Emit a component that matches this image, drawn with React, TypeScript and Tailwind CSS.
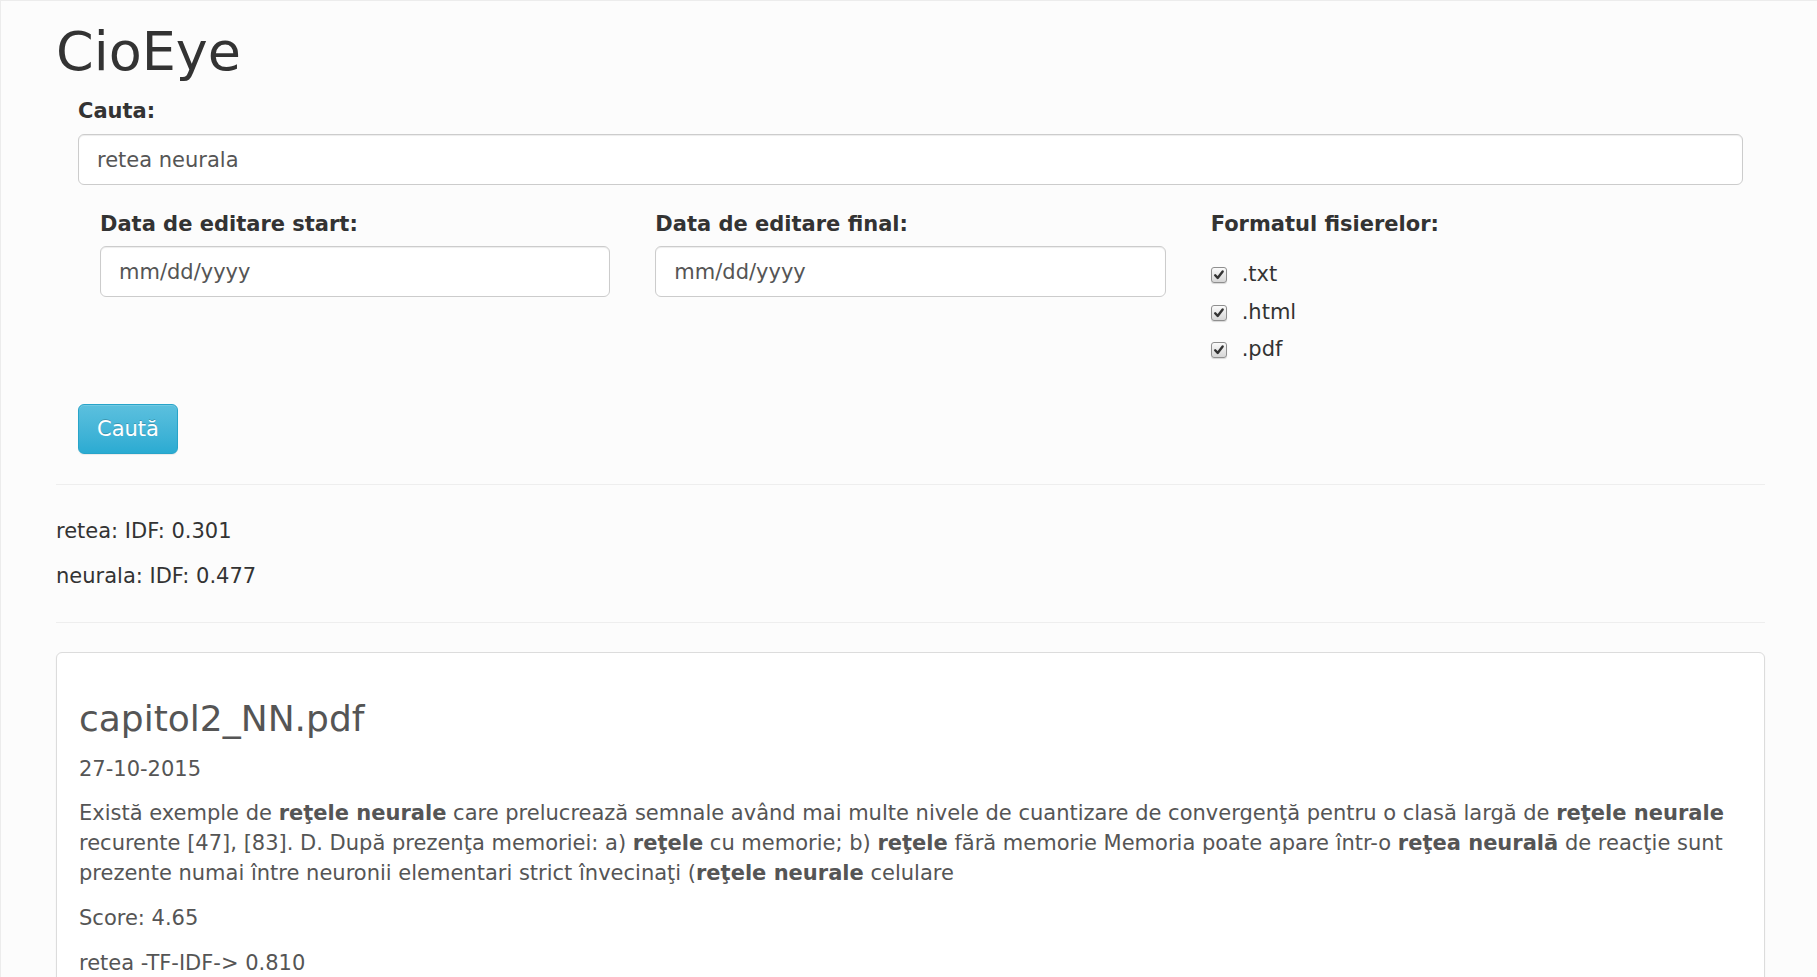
import React from "react";

const CheckMark = () => (
  <span className="inline-flex h-[16px] w-[16px] shrink-0 items-center justify-center rounded-[3px] border border-[#8f8f8f] bg-linear-to-b from-[#fbfbfb] to-[#d6d6d6] shadow-[0_1px_1px_rgba(0,0,0,0.15)]">
    <svg viewBox="0 0 15 15" className="h-[14px] w-[14px]">
      <path d="M3.4 7.8 L6.1 10.6 L11.4 3.8" fill="none" stroke="#333" strokeWidth="2.6" strokeLinecap="round" strokeLinejoin="round" />
    </svg>
  </span>
);

const formats = [".txt", ".html", ".pdf"];

export default function App() {
  return (
    <div
      className="min-h-screen border-t border-l border-[#ececec] bg-[#fcfcfc] pl-[55px] pr-[52px] text-[21px] leading-[30px] text-[#333]"
      style={{ fontFamily: '"DejaVu Sans", Verdana, sans-serif' }}
    >
      <h1 className="mt-[21px] mb-[15px] text-[54px] leading-[59px] font-normal">CioEye</h1>

      <form className="flex flex-col" onSubmit={(e) => e.preventDefault()}>
        <div className="px-[22px]">
          <label className="mb-[8px] block font-bold">Cauta:</label>
          <input
            type="text"
            defaultValue="retea neurala"
            className="block h-[51px] w-full rounded-[6px] border border-[#ccc] bg-white px-[18px] text-[21px] text-[#555] shadow-[inset_0_1px_1px_rgba(0,0,0,0.075)] outline-none"
          />
        </div>

        <div className="mt-[24px] grid grid-cols-3 gap-[45px] px-[44px]">
          <div>
            <label className="mb-[7px] block font-bold">Data de editare start:</label>
            <input
              type="text"
              placeholder="mm/dd/yyyy"
              className="block h-[51px] w-full rounded-[6px] border border-[#ccc] bg-white px-[18px] text-[21px] text-[#555] shadow-[inset_0_1px_1px_rgba(0,0,0,0.075)] outline-none placeholder:text-[#555]"
            />
          </div>
          <div>
            <label className="mb-[7px] block font-bold">Data de editare final:</label>
            <input
              type="text"
              placeholder="mm/dd/yyyy"
              className="block h-[51px] w-full rounded-[6px] border border-[#ccc] bg-white px-[18px] text-[21px] text-[#555] shadow-[inset_0_1px_1px_rgba(0,0,0,0.075)] outline-none placeholder:text-[#555]"
            />
          </div>
          <div>
            <label className="block font-bold">Formatul fisierelor:</label>
            <div className="mt-[20px] flex flex-col gap-[7.5px]">
              {formats.map((f) => (
                <label key={f} className="flex h-[30px] items-center gap-[15px]">
                  <span className="mt-[2px]">
                    <CheckMark />
                  </span>
                  <span>{f}</span>
                </label>
              ))}
            </div>
          </div>
        </div>

        <div className="mt-[40px] px-[22px]">
          <button
            type="submit"
            className="h-[50px] w-[100px] rounded-[6px] border border-[#28a4c9] bg-linear-to-b from-[#5bc0de] to-[#2aabd2] text-[21px] text-white shadow-[inset_0_1px_0_rgba(255,255,255,0.15),0_1px_1px_rgba(0,0,0,0.075)] [text-shadow:0_-1px_0_rgba(0,0,0,0.2)]"
          >
            Caută
          </button>
        </div>
      </form>

      <hr className="mt-[30px] border-t border-[#eee]" />

      <div className="mt-[31px] flex flex-col gap-[15px]">
        <p>retea: IDF: 0.301</p>
        <p>neurala: IDF: 0.477</p>
      </div>

      <hr className="mt-[31px] border-t border-[#eee]" />

      <div className="mt-[29px] rounded-[6px] border border-[#dcdcdc] bg-white px-[22px] pt-[46px] pb-[22px] text-[#555] shadow-[0_1px_2px_rgba(0,0,0,0.05)]">
        <h3 className="text-[36px] leading-[40px] font-normal">capitol2_NN.pdf</h3>
        <p className="mt-[15px]">27-10-2015</p>
        <p className="mt-[14px]">
          Există exemple de <b>reţele neurale</b> care prelucrează semnale având mai multe nivele de cuantizare de
          convergenţă pentru o clasă largă de <b>reţele neurale</b> recurente [47], [83]. D. După prezenţa memoriei: a){" "}
          <b>reţele</b> cu memorie; b) <b>reţele</b> fără memorie Memoria poate apare într-o <b>reţea neurală</b> de
          reacţie sunt prezente numai între neuronii elementari strict învecinaţi (<b>reţele neurale</b> celulare
        </p>
        <p className="mt-[15px]">Score: 4.65</p>
        <p className="mt-[15px]">retea -TF-IDF-&gt; 0.810</p>
      </div>
    </div>
  );
}
